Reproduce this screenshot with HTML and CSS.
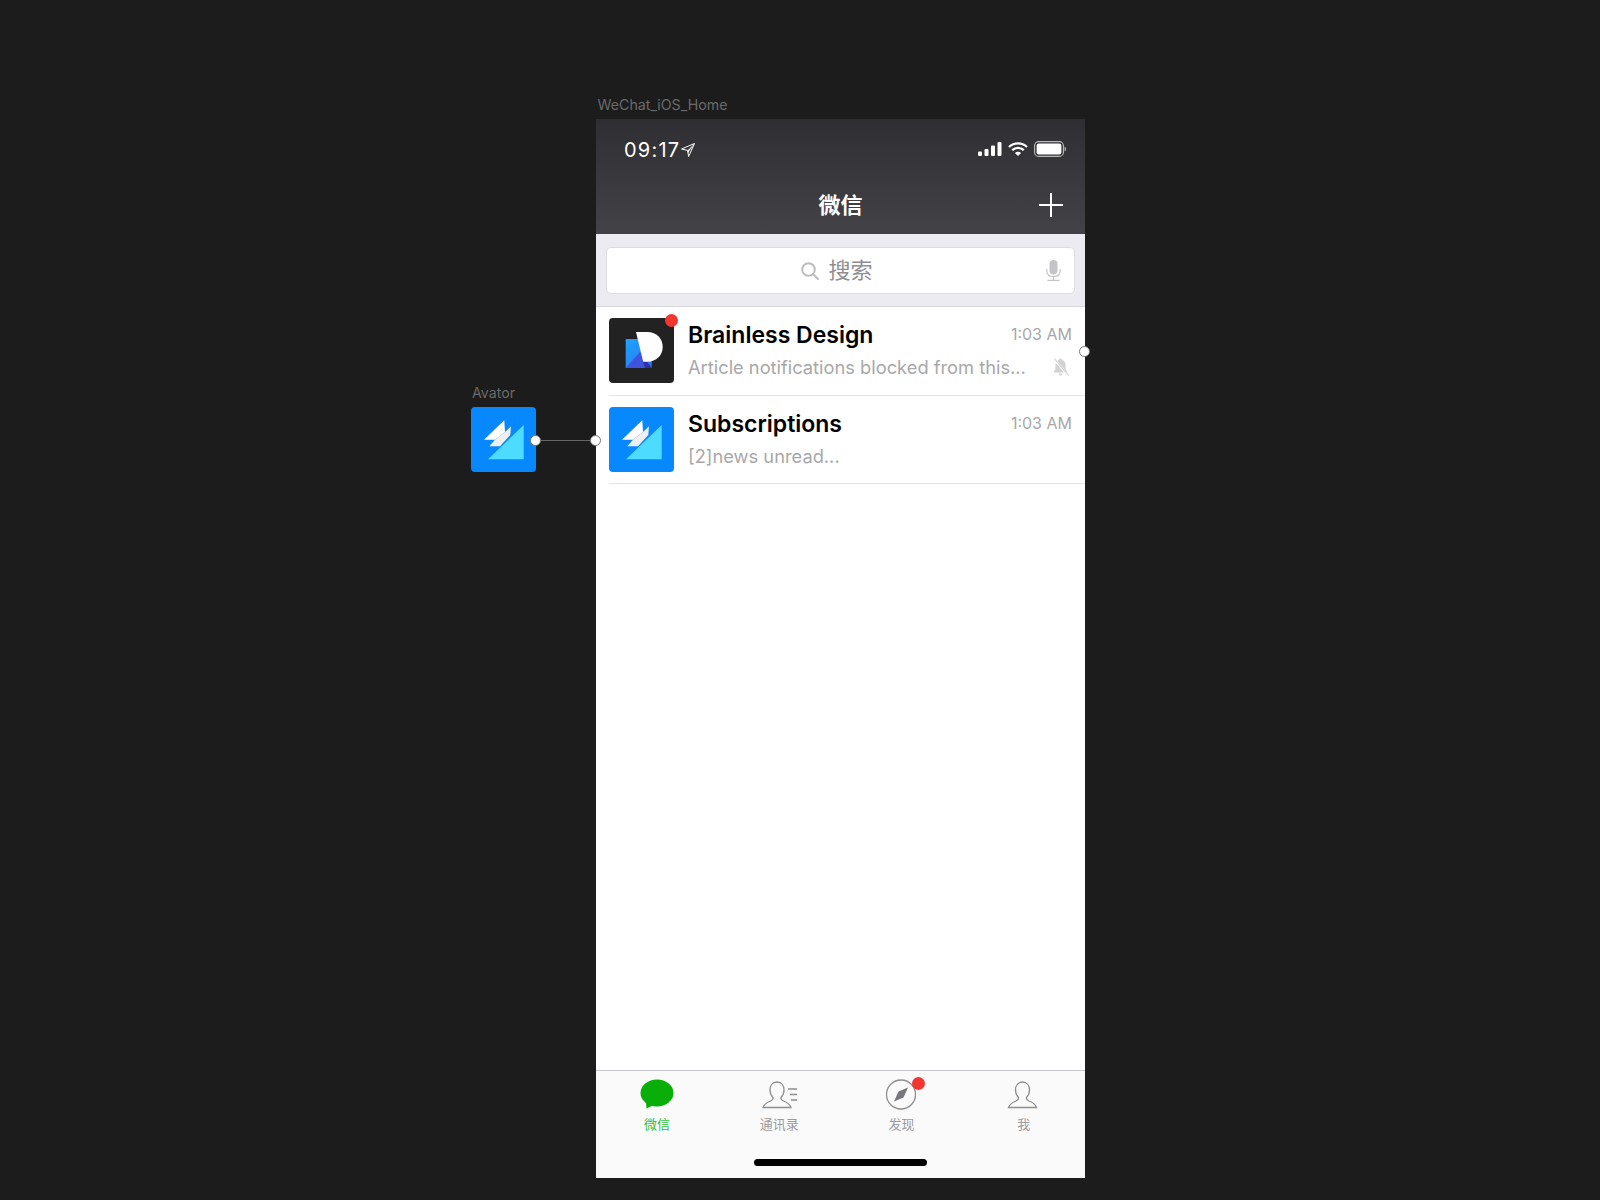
FILE: index.html

```html
<!DOCTYPE html>
<html lang="zh">
<head>
<meta charset="UTF-8" />
<title>WeChat_iOS_Home</title>
<link rel="stylesheet" href="styles.css">
</head>
<body>

<div class="canvas">

  <div class="layer-label phone-label">WeChat_iOS_Home</div>

  <div class="avatar-symbol">
    <div class="layer-label">Avator</div>
    <svg class="avatar" viewBox="0 0 65 65">
      <rect width="65" height="65" rx="4" fill="#0788ff"/>
      <polygon points="52.7,18 52.7,52.3 17,52.3" fill="#4ddcff"/>
      <polygon points="13,32.7 33.3,13.3 34,25 24,32.7" fill="#fff"/>
      <polygon points="24,32.700 34,25 40,19.300 39.300,28 29,39.300 18.300,39.300" fill="#efefef"/>
    </svg>
  </div>

  <div class="connector"></div>
  <div class="dot dot-avatar"></div>
  <div class="dot dot-phone"></div>
  <div class="dot dot-row"></div>

  <div class="phone">
    <header class="top">
      <div class="status">
        <div class="clock">
          <span>09:17</span>
          <svg class="arrow" width="14" height="14" viewBox="0 0 14 14"><path d="M13.500 0.500 L0.500 6 L6.600 7.400 L7.600 13.500 Z" fill="none" stroke="#fff" stroke-width="1" stroke-linejoin="round"/><path d="M13.500 0.500 L6.600 7.400 L7 10 L10 5.500 Z" fill="#fff"/></svg>
        </div>
        <div class="status-icons">
          <svg width="24" height="14" viewBox="0 0 24 14" fill="#fff">
            <rect x="0" y="9.500" width="4" height="4.500" rx="1"/>
            <rect x="6.500" y="7" width="4" height="7" rx="1"/>
            <rect x="13" y="3.500" width="4" height="10.500" rx="1"/>
            <rect x="19.500" y="0" width="4" height="14" rx="1"/>
          </svg>
          <svg width="20" height="14" viewBox="0 0 20 14" fill="none" stroke="#fff" stroke-width="2.300">
            <path d="M1 5 C6 0.200 14 0.200 19 5"/>
            <path d="M4.200 8.200 C7.500 5 12.500 5 15.800 8.200"/>
            <path d="M10 14 L6.900 10.900 C8.600 9.500 11.400 9.500 13.100 10.900 Z" fill="#fff" stroke="none"/>
          </svg>
          <svg width="32" height="16" viewBox="0 0 32 16">
            <rect x="0.600" y="0.600" width="28.800" height="14.800" rx="4" fill="none" stroke="#bbb" stroke-width="1.100"/>
            <rect x="2.600" y="2.600" width="24.800" height="10.800" rx="2.200" fill="#fff"/>
            <path d="M30.600 5.600 C31.600 6 32 6.800 32 8 C32 9.200 31.600 10 30.600 10.400 Z" fill="#bbb"/>
          </svg>
        </div>
      </div>
      <div class="nav">
        <div class="nav-title">微信</div>
        <svg class="plus" width="24" height="24" viewBox="0 0 24 24"><path d="M12 0 V24 M0 12 H24" stroke="#fff" stroke-width="2"/></svg>
      </div>
    </header>

    <div class="search-wrap">
      <div class="search">
        <svg width="18" height="18" viewBox="0 0 18 18" fill="none" stroke="#bdbdc1" stroke-width="2"><circle cx="7.500" cy="7.500" r="6.300"/><path d="M12 12 L17 17" stroke-linecap="round"/></svg>
        <span>搜索</span>
        <svg class="mic" width="15" height="21" viewBox="0 0 15 21" fill="none" stroke="#c4c4c7" stroke-width="1.200">
          <rect x="3.500" y="0" width="8" height="14.500" rx="4" fill="#c4c4c7" stroke="none"/>
          <path d="M0.800 9 V10.500 C0.800 14.500 3.500 16.600 7.500 16.600 C11.500 16.600 14.200 14.500 14.200 10.500 V9 M7.500 16.600 V20 M1.500 20.400 H13.500"/>
        </svg>
      </div>
    </div>

    <main class="list">
      <div class="row">
        <div class="row-avatar">
          <svg class="avatar" viewBox="0 0 65 65">
            <defs>
              <linearGradient id="logoBlue" x1="0" y1="0" x2="0.700" y2="1">
                <stop offset="0" stop-color="#1ea2ff"/>
                <stop offset="1" stop-color="#2a7cf0"/>
              </linearGradient>
            </defs>
            <rect width="65" height="65" rx="4" fill="#222"/>
            <rect x="16.700" y="21" width="26" height="29" fill="url(#logoBlue)"/>
            <polygon points="16.700,50 31,34 42.700,50" fill="#3f54de"/>
            <polygon points="33.500,42 38,43.700 42.700,50 36,50" fill="#2f2fa8"/>
            <path d="M27 14 H38.500 C47.500 14 53.700 20.500 53.700 29 C53.700 37.500 47 43.700 38.500 43.700 H34.200 Z" fill="#fff"/>
          </svg>
          <div class="badge"></div>
        </div>
        <div class="row-body">
          <div class="row-line">
            <span class="row-name">Brainless Design</span>
            <span class="row-time">1:03 AM</span>
          </div>
          <div class="row-line">
            <span class="row-sub">Article notifications blocked from this...</span>
            <svg class="mute" width="17" height="18" viewBox="0 0 17 18">
              <path d="M8.500 0.500 C9.500 0.500 10 1.200 10 2 C12.500 2.700 13.600 4.800 13.600 7.500 V11 L15.500 14.500 H1.500 L3.400 11 V7.500 C3.400 4.800 4.500 2.700 7 2 C7 1.200 7.500 0.500 8.500 0.500 Z M6.500 15.500 H10.500 C10.400 16.900 9.600 17.600 8.500 17.600 C7.400 17.600 6.600 16.900 6.500 15.500 Z" fill="#d2d2d4"/>
              <path d="M1.500 0.500 L16 17.500" stroke="#fff" stroke-width="2.400"/>
              <path d="M2.200 0.500 L16.600 17.500" stroke="#d2d2d4" stroke-width="1.100"/>
            </svg>
          </div>
        </div>
      </div>

      <div class="row">
        <div class="row-avatar">
          <svg class="avatar" viewBox="0 0 65 65">
            <rect width="65" height="65" rx="4" fill="#0788ff"/>
            <polygon points="52.700,18 52.700,52.300 17,52.300" fill="#4ddcff"/>
            <polygon points="13,32.700 33.300,13.300 34,25 24,32.700" fill="#fff"/>
            <polygon points="24,32.700 34,25 40,19.300 39.300,28 29,39.300 18.300,39.300" fill="#efefef"/>
          </svg>
        </div>
        <div class="row-body">
          <div class="row-line">
            <span class="row-name">Subscriptions</span>
            <span class="row-time">1:03 AM</span>
          </div>
          <div class="row-line">
            <span class="row-sub">[2]news unread...</span>
          </div>
        </div>
      </div>
    </main>

    <footer class="tabbar">
      <div class="tabs">
        <div class="tab tab-active">
          <svg class="tab-icon" width="40" height="34" viewBox="0 0 40 34">
            <ellipse cx="20" cy="15" rx="16.500" ry="13.500" fill="#09ae09"/>
            <path d="M9 24 L9.500 30.500 L17 27 Z" fill="#09ae09"/>
          </svg>
          <span>微信</span>
        </div>
        <div class="tab">
          <svg class="tab-icon" width="40" height="34" viewBox="-1 0 40 34" fill="none" stroke="#8e8e93" stroke-width="1.300">
            <path d="M17 4 C12.500 4 10 7.500 10 12 C10 15 11.500 18 13 19.500 C13.500 21 12.500 22 10.500 23 C7 24.500 4 26 3 29.500 H31 C30 26 27 24.500 23.500 23 C21.500 22 20.500 21 21 19.500 C22.500 18 24 15 24 12 C24 7.500 21.500 4 17 4 Z"/>
            <path d="M28 11 H37 M30 16.500 H37 M31 22 H37" stroke-width="1.500"/>
          </svg>
          <span>通讯录</span>
        </div>
        <div class="tab">
          <div class="tab-icon-wrap">
            <svg class="tab-icon" width="40" height="34" viewBox="1 0 40 34">
              <circle cx="20" cy="16.500" r="14.500" fill="none" stroke="#8e8e93" stroke-width="1.300"/>
              <path d="M27 9.500 L22.500 19.500 L13 23.500 L17.500 13.500 Z" fill="#77777c"/>
            </svg>
            <div class="badge badge-tab"></div>
          </div>
          <span>发现</span>
        </div>
        <div class="tab">
          <svg class="tab-icon" width="40" height="34" viewBox="1.500 0 40 34" fill="none" stroke="#8e8e93" stroke-width="1.300">
            <path d="M20 4 C15.500 4 13 7.500 13 12 C13 15 14.500 18 16 19.500 C16.500 21 15.500 22 13.500 23 C10 24.500 7 26 6 29.500 H34 C33 26 30 24.500 26.500 23 C24.500 22 23.500 21 24 19.500 C25.500 18 27 15 27 12 C27 7.500 24.500 4 20 4 Z"/>
          </svg>
          <span>我</span>
        </div>
      </div>
      <div class="home-bar"></div>
    </footer>
  </div>
</div>

</body>
</html>
```

FILE: styles.css

```css
* {
  box-sizing: border-box;
}
html, body {
  margin: 0;
  height: 100%;
}
body {
  background: #1c1c1c;
  font-family: Inter, "Noto Sans CJK SC", "Liberation Sans", sans-serif;
}
.canvas {
  position: relative;
  width: 1600px;
  height: 1200px;
  overflow: hidden;
}

/* artboard labels */
.layer-label {
  color: #6a6a6a;
  font-size: 14.2px;
  line-height: 18px;
}
.phone-label {
  position: absolute;
  left: 597.5px;
  top: 96px;
}
.avatar-symbol {
  position: absolute;
  left: 471px;
  top: 384px;
  width: 65px;
}
.avatar-symbol .layer-label {
  margin-left: 1px;
  height: 23px;
}
.avatar {
  display: block;
  width: 65px;
  height: 65px;
}

/* link between symbol and instance */
.connector {
  position: absolute;
  left: 536px;
  top: 440px;
  width: 60px;
  height: 1px;
  background: #666;
}
.dot {
  position: absolute;
  z-index: 2;
  width: 11px;
  height: 11px;
  background: #fff;
  border: 1px solid #777;
  border-radius: 50%;
}
.dot-avatar { left: 530px; top: 435px; }
.dot-phone { left: 590px; top: 435px; }
.dot-row { left: 1079px; top: 346px; }

.phone {
  position: absolute;
  left: 596px;
  top: 119px;
  width: 489px;
  height: 1058.5px;
  display: flex;
  flex-direction: column;
  background: #fff;
}

/* header */
.top {
  height: 115px;
  background: linear-gradient(#2e2e33, #424247);
  color: #fff;
}
.status {
  height: 58px;
  padding: 2px 19px 0 28px;
  display: flex;
  align-items: center;
  justify-content: space-between;
}
.clock {
  display: flex;
  align-items: center;
  gap: 1px;
  padding-top: 1px;
  font-size: 20px;
  letter-spacing: 1.2px;
}
.status-icons {
  display: flex;
  align-items: center;
  gap: 6px;
}
.nav {
  position: relative;
  height: 57px;
  display: flex;
  align-items: center;
  justify-content: center;
}
.nav-title {
  padding-bottom: 5px;
  font-size: 22px;
  font-weight: 700;
}
.plus {
  position: absolute;
  right: 22px;
  top: 16px;
}

/* search */
.search-wrap {
  height: 73px;
  padding: 13px 10px 12px 10px;
  background: #ebebf1;
  border-bottom: 1px solid #d9d9dd;
}
.search {
  position: relative;
  height: 47px;
  padding-right: 7px;
  display: flex;
  align-items: center;
  justify-content: center;
  gap: 9px;
  background: #fff;
  border: 1px solid #dedee2;
  border-radius: 5px;
  color: #8e8e93;
  font-size: 22px;
}
.search span {
  padding-bottom: 6px;
}
.mic {
  position: absolute;
  right: 13px;
  top: 12px;
}

/* chat list */
.list {
  flex: 1;
}
.row {
  height: 88.5px;
  margin-left: 13px;
  display: flex;
  align-items: center;
  gap: 14px;
  border-bottom: 1px solid #e5e5e5;
}
.row-avatar {
  position: relative;
  flex: none;
}
.row-body {
  flex: 1;
  padding-right: 13px;
  display: flex;
  flex-direction: column;
  gap: 4px;
}
.row-line {
  position: relative;
  height: 29px;
  display: flex;
  align-items: center;
  justify-content: space-between;
}
.row-name {
  padding-top: 2px;
  color: #000;
  font-size: 23px;
  font-weight: 600;
}
.row-time {
  color: #a8a8a8;
  font-size: 16px;
}
.row-sub {
  color: #a8a8a8;
  font-size: 18.3px;
}
.mute {
  flex: none;
  margin-right: 3px;
}
.badge {
  position: absolute;
  right: -4px;
  top: -4px;
  width: 13px;
  height: 13px;
  background: #f43530;
  border-radius: 50%;
}

/* tabs */
.tabbar {
  height: 108px;
  background: #fafafa;
  border-top: 1px solid #c8c8cc;
}
.tabs {
  display: grid;
  grid-template-columns: repeat(4, 1fr);
  padding-top: 7px;
}
.tab {
  display: flex;
  flex-direction: column;
  align-items: center;
  color: #9a9a9e;
  font-size: 13px;
  line-height: 18px;
}
.tab-active {
  color: #2fbf3b;
}
.tab-icon {
  display: block;
}
.tab-icon-wrap {
  position: relative;
}
.tab-icon-wrap .tab-icon + .badge-tab {
  right: -3px;
  top: -1px;
}
.tab span {
  margin-top: 3px;
}
.home-bar {
  width: 173px;
  height: 7px;
  margin: 26px auto 0;
  background: #000;
  border-radius: 4px;
}
```
